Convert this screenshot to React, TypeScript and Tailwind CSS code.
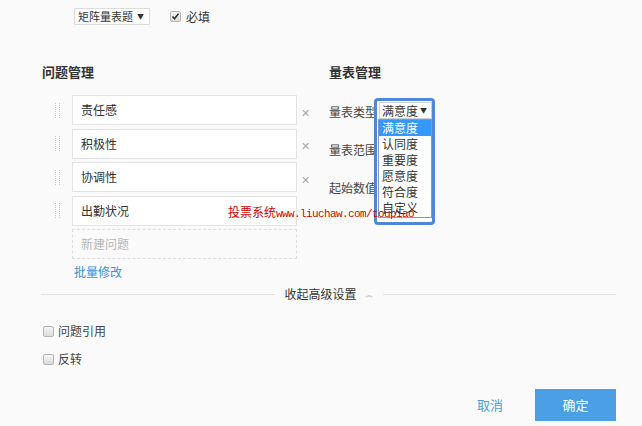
import React from 'react';

const questions = ['责任感', '积极性', '协调性', '出勤状况'];
const scaleTypes = ['满意度', '认同度', '重要度', '愿意度', '符合度', '自定义'];

const DragHandle: React.FC = () => (
    <svg width="6" height="15" viewBox="0 0 6 15" className="shrink-0">
        {[0, 2, 4, 6, 8, 10, 12, 14].map(y => (
            <g key={y}>
                <rect x="0" y={y} width="1" height="1" fill="#c8c8c8" />
                <rect x="4" y={y} width="1" height="1" fill="#c8c8c8" />
            </g>
        ))}
    </svg>
);

const GrayCheckbox: React.FC<{ checked?: boolean }> = ({ checked }) => (
    <span className="w-[11px] h-[11px] border border-[#b5b5b5] rounded-[2px] bg-gradient-to-b from-[#f4f4f4] to-[#dcdcdc] flex items-center justify-center shrink-0">
        {checked && (
            <svg width="9" height="9" viewBox="0 0 9 9">
                <path d="M1.5 4.5 L3.5 6.8 L7.5 1.8" stroke="#333" strokeWidth="1.6" fill="none" />
            </svg>
        )}
    </span>
);

const App: React.FC = () => {
    return (
        <div className="relative w-[642px] h-[426px] bg-[#fafafa] overflow-hidden font-['Noto_Sans_CJK_SC',sans-serif] text-[#333]">
            {/* top: question type + required */}
            <div className="flex items-center pt-[8px] pl-[74px] h-[25px]">
                <div className="w-[76px] h-[17px] bg-white border border-[#dcdcdc] flex items-center justify-between pl-[3px] pr-[5px] text-[11px] leading-[15px] whitespace-nowrap">
                    <span>矩阵量表题</span>
                    <span className="text-[7px]">▼</span>
                </div>
                <label className="flex items-center ml-[20px] gap-[5px] text-[12px] leading-[15px]">
                    <GrayCheckbox checked />
                    <span>必填</span>
                </label>
            </div>

            <div className="flex mt-[37px]">
                {/* question management */}
                <div className="w-[329px] pl-[42px]">
                    <h3 className="h-[20px] text-[13px] leading-[20px] font-semibold text-[#333]">问题管理</h3>
                    <div className="mt-[13px] flex flex-col gap-[3.5px]">
                        {questions.map((q, i) => (
                            <div key={q} className="flex items-center">
                                <div className="w-[30px] flex justify-center pl-[1px]">
                                    <DragHandle />
                                </div>
                                <div className="w-[225px] h-[30px] bg-white border border-[#e3e3e3] flex items-center pl-[8px] text-[12px]">
                                    {q}
                                </div>
                                {i < 3 && <span className="ml-[4px] mt-[4px] text-[11px] leading-none text-[#a8a8a8]">✕</span>}
                            </div>
                        ))}
                        <div className="ml-[30px] w-[225px] h-[30px] border border-dashed border-[#dcdcdc] flex items-center pl-[8px] text-[12px] text-[#b8b8b8]">
                            新建问题
                        </div>
                    </div>
                    <div className="mt-[5px] ml-[32px] text-[12px] leading-[16px] text-[#3d8fd8]">批量修改</div>
                </div>

                {/* scale management */}
                <div className="flex-1">
                    <h3 className="h-[20px] text-[13px] leading-[20px] font-semibold text-[#333]">量表管理</h3>
                    <div className="mt-[11px] flex flex-col text-[12px] text-[#444]">
                        <div className="h-[38px] flex items-center">量表类型</div>
                        <div className="h-[38px] flex items-center">量表范围</div>
                        <div className="h-[38px] flex items-center">起始数值</div>
                    </div>
                </div>
            </div>

            {/* advanced settings divider */}
            <div className="flex items-center mt-[4px] pl-[41px] pr-[26px] h-[20px]">
                <div className="flex-1 h-px bg-[#e2e2e2]" />
                <div className="flex items-center px-[10px] text-[12px] text-[#333]">
                    <span>收起高级设置</span>
                    <span className="ml-[9px] text-[7px] text-[#bbb]">︽</span>
                </div>
                <div className="flex-1 h-px bg-[#e2e2e2]" />
            </div>

            <div className="mt-[17px] pl-[43px] flex flex-col gap-[8px] text-[12px] text-[#444]">
                <label className="h-[20px] flex items-center gap-[4px]">
                    <GrayCheckbox />
                    <span>问题引用</span>
                </label>
                <label className="h-[20px] flex items-center gap-[4px]">
                    <GrayCheckbox />
                    <span>反转</span>
                </label>
            </div>

            <div className="mt-[20px] flex justify-end items-center pr-[26px]">
                <button className="text-[13px] text-[#4a9fe5]">取消</button>
                <button className="ml-[32px] w-[81px] h-[32px] bg-[#4a9fe5] text-white text-[13px]">确定</button>
            </div>

            {/* opened scale type dropdown */}
            <div className="absolute left-[374px] top-[98px] w-[61px] h-[127px] rounded-[4px] border-[3px] border-[#4f86d8] bg-white p-[1px]">
                <div className="ml-[1px] w-[53px] h-[17px] border border-[#cfcfcf] flex items-center justify-between pl-[2px] pr-[4px] text-[12px] leading-[15px] whitespace-nowrap">
                    <span>满意度</span>
                    <span className="text-[7px]">▼</span>
                </div>
                <div className="w-[54px] h-[99px] border border-[#7f9db9] overflow-hidden text-[12px]">
                    {scaleTypes.map((t, i) => (
                        <div
                            key={t}
                            className={`h-[16px] leading-[16px] pl-[3px] ${i === 0 ? 'bg-[#3399ff] text-white' : 'text-[#333]'}`}
                        >
                            {t}
                        </div>
                    ))}
                </div>
            </div>

            {/* watermark */}
            <div className="absolute left-[228px] top-[204px] flex items-baseline text-[#d40000] leading-[16px] whitespace-nowrap">
                <span className="text-[12px]">投票系统</span>
                <span className="font-['Liberation_Mono',monospace] text-[11px] tracking-[-0.6px]">www.liuchaw.com/toupiao</span>
            </div>
        </div>
    );
};

export default App;
